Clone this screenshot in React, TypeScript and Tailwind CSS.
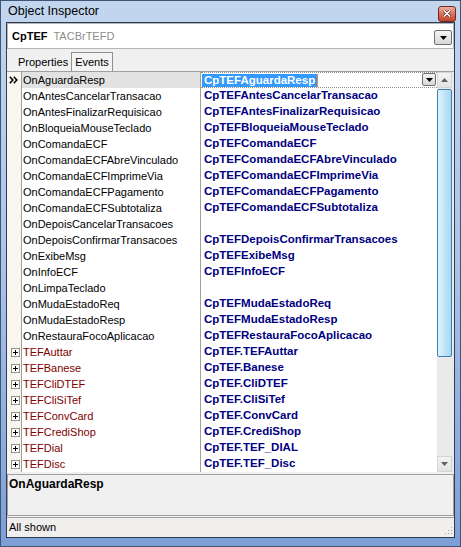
import React from 'react';

type Row = { name: string; value: string; sub?: boolean };

const rows: Row[] = [
  { name: 'OnAguardaResp', value: 'CpTEFAguardaResp' },
  { name: 'OnAntesCancelarTransacao', value: 'CpTEFAntesCancelarTransacao' },
  { name: 'OnAntesFinalizarRequisicao', value: 'CpTEFAntesFinalizarRequisicao' },
  { name: 'OnBloqueiaMouseTeclado', value: 'CpTEFBloqueiaMouseTeclado' },
  { name: 'OnComandaECF', value: 'CpTEFComandaECF' },
  { name: 'OnComandaECFAbreVinculado', value: 'CpTEFComandaECFAbreVinculado' },
  { name: 'OnComandaECFImprimeVia', value: 'CpTEFComandaECFImprimeVia' },
  { name: 'OnComandaECFPagamento', value: 'CpTEFComandaECFPagamento' },
  { name: 'OnComandaECFSubtotaliza', value: 'CpTEFComandaECFSubtotaliza' },
  { name: 'OnDepoisCancelarTransacoes', value: '' },
  { name: 'OnDepoisConfirmarTransacoes', value: 'CpTEFDepoisConfirmarTransacoes' },
  { name: 'OnExibeMsg', value: 'CpTEFExibeMsg' },
  { name: 'OnInfoECF', value: 'CpTEFInfoECF' },
  { name: 'OnLimpaTeclado', value: '' },
  { name: 'OnMudaEstadoReq', value: 'CpTEFMudaEstadoReq' },
  { name: 'OnMudaEstadoResp', value: 'CpTEFMudaEstadoResp' },
  { name: 'OnRestauraFocoAplicacao', value: 'CpTEFRestauraFocoAplicacao' },
  { name: 'TEFAuttar', value: 'CpTEF.TEFAuttar', sub: true },
  { name: 'TEFBanese', value: 'CpTEF.Banese', sub: true },
  { name: 'TEFCliDTEF', value: 'CpTEF.CliDTEF', sub: true },
  { name: 'TEFCliSiTef', value: 'CpTEF.CliSiTef', sub: true },
  { name: 'TEFConvCard', value: 'CpTEF.ConvCard', sub: true },
  { name: 'TEFCrediShop', value: 'CpTEF.CrediShop', sub: true },
  { name: 'TEFDial', value: 'CpTEF.TEF_DIAL', sub: true },
  { name: 'TEFDisc', value: 'CpTEF.TEF_Disc', sub: true },
];

function DropButton({ className }: { className: string }) {
  return (
    <div className={`flex items-center justify-center rounded-[2px] border border-[#707070] bg-gradient-to-b from-[#f4f4f4] to-[#d8d8d8] ${className}`}>
      <svg width="7" height="4" viewBox="0 0 7 4">
        <path d="M0 0h7L3.5 4z" fill="#000" />
      </svg>
    </div>
  );
}

function Plus() {
  return (
    <div className="flex h-[9px] w-[9px] items-center justify-center border border-[#919191] bg-white">
      <svg width="5" height="5" viewBox="0 0 5 5">
        <path d="M0 2.5h5M2.5 0v5" stroke="#000" strokeWidth="1" />
      </svg>
    </div>
  );
}

// the ">>" marker of the current row
function Current() {
  return (
    <svg width="9" height="8" viewBox="0 0 9 8">
      <path d="M0.8 0.8L3.8 4L0.8 7.2M4.8 0.8L7.8 4L4.8 7.2" stroke="#000" strokeWidth="1.6" fill="none" />
    </svg>
  );
}

function GridRow({ row, selected }: { row: Row; selected: boolean }) {
  return (
    <div className="flex h-[16px]">
      <div className="flex w-[15px] shrink-0 items-center border-r border-[#a0a0a0] pl-[2px]">
        {selected && <Current />}
        {row.sub && <div className="ml-[2px]"><Plus /></div>}
      </div>
      <div className={`flex w-[179px] shrink-0 items-center border-r border-[#a0a0a0] pl-[1px] text-[11px] ${selected ? 'bg-[#e2e2e2]' : ''} ${row.sub ? 'text-[#800000]' : 'text-black'}`}>
        {row.name}
      </div>
      {selected ? (
        <div className="relative flex w-[236px] shrink-0 items-center border-y border-dotted border-[#909090] pl-[1px]">
          <span className="bg-[#3399ff] px-[2px] text-[11.5px] leading-[13px] font-bold text-white">{row.value}</span>
          <span className="h-[13px] w-[1px] bg-[#f08a24]" />
          <DropButton className="absolute top-[0px] right-[1px] h-[13px] w-[14px]" />
        </div>
      ) : (
        <div className="flex w-[236px] shrink-0 items-center pl-[3px] text-[11.5px] font-bold text-[#000080]">
          {row.value}
        </div>
      )}
    </div>
  );
}

export default function App() {
  return (
    <div className="flex h-[547px] w-[461px] flex-col border border-[#3f5576] bg-gradient-to-b from-[#c2d6ee] via-[#a9c3e8] to-[#7d9fd6] font-['Liberation_Sans',Arial,sans-serif]">
      <div className="flex h-[21px] items-center justify-between pr-[4px] pl-[7px]">
        <span className="text-[12.5px] text-black">Object Inspector</span>
        <div className="mt-[4px] flex h-[16px] w-[18px] items-center justify-center rounded-[3px] border border-[#6f2a1f] bg-gradient-to-b from-[#eab0a2] via-[#d9705a] to-[#c3442c]">
          <svg width="8" height="7" viewBox="0 0 8 7">
            <path d="M1 0.5l6 6M7 0.5l-6 6" stroke="#5a1a10" strokeWidth="2.6" />
            <path d="M1 0.5l6 6M7 0.5l-6 6" stroke="#fff" strokeWidth="1.6" />
          </svg>
        </div>
      </div>
      <div className="mx-[5px] mb-[8px] flex flex-1 flex-col border border-[#2f3c52] bg-[#f0f0f0]">
        {/* component combo */}
        <div className="relative flex h-[26px] items-center border border-[#b5b5b5] bg-white pl-[4px]">
          <span className="text-[11px] font-bold text-black">CpTEF</span>
          <span className="ml-[6px] text-[11px] text-[#8d8d8d]">TACBrTEFD</span>
          <DropButton className="absolute top-[6px] right-[1px] h-[15px] w-[18px]" />
        </div>
        {/* tabs */}
        <div className="flex h-[23px] items-end border-b border-[#a0a0a0] bg-[#f0f0f0] pl-[9px]">
          <div className="flex h-[18px] items-center px-[2px] text-[11px] text-black">Properties</div>
          <div className="ml-[1px] flex h-[19px] items-center border-x border-t border-[#8e8f8f] bg-[#f4f4f4] px-[3px] text-[11px] text-black">Events</div>
        </div>
        {/* grid */}
        <div className="flex h-[400px] bg-white">
          <div className="relative flex w-[430px] flex-col">
            <div className="absolute top-0 bottom-0 left-0 w-[15px] bg-[#f8f6ee]" />
            <div className="relative flex flex-col">
              {rows.map((r, i) => (
                <GridRow key={r.name} row={r} selected={i === 0} />
              ))}
            </div>
          </div>
          {/* scrollbar */}
          <div className="flex w-[17px] flex-col bg-[#eaeaea] pr-[2px]">
            <div className="flex h-[16px] items-center justify-center border border-[#d5d5d5] bg-gradient-to-b from-[#f3f3f3] to-[#e3e3e3]">
              <svg width="7" height="4" viewBox="0 0 7 4"><path d="M0 4h7L3.5 0z" fill="#606060" /></svg>
            </div>
            <div className="mt-[1px] h-[268px] rounded-[2px] border border-[#3c7fb1] bg-gradient-to-r from-[#e3f4fd] via-[#bfe4f9] to-[#a7d8f5]" />
            <div className="flex-1" />
            <div className="flex h-[16px] items-center justify-center border border-[#d5d5d5] bg-gradient-to-b from-[#f3f3f3] to-[#e3e3e3]">
              <svg width="7" height="4" viewBox="0 0 7 4"><path d="M0 0h7L3.5 4z" fill="#606060" /></svg>
            </div>
          </div>
        </div>
        {/* description */}
        <div className="mt-[2px] h-[42px] border border-[#a0a0a0] bg-[#f0f0f0] pt-[2px] pl-[1px] text-[12px] leading-[14px] font-bold text-black">
          OnAguardaResp
        </div>
        {/* status */}
        <div className="relative mt-[1px] flex h-[20px] items-center border-t border-[#a0a0a0] bg-[#f0efee] pl-[2px]">
          <span className="text-[11px] text-black">All shown</span>
          <svg className="absolute right-[1px] bottom-[2px]" width="8" height="8" viewBox="0 0 8 8">
            <g fill="#a8a8a8">
              <rect x="6" y="0" width="1" height="1" />
              <rect x="3" y="3" width="1" height="1" />
              <rect x="6" y="3" width="1" height="1" />
              <rect x="0" y="6" width="1" height="1" />
              <rect x="3" y="6" width="1" height="1" />
              <rect x="6" y="6" width="1" height="1" />
            </g>
          </svg>
        </div>
      </div>
    </div>
  );
}
